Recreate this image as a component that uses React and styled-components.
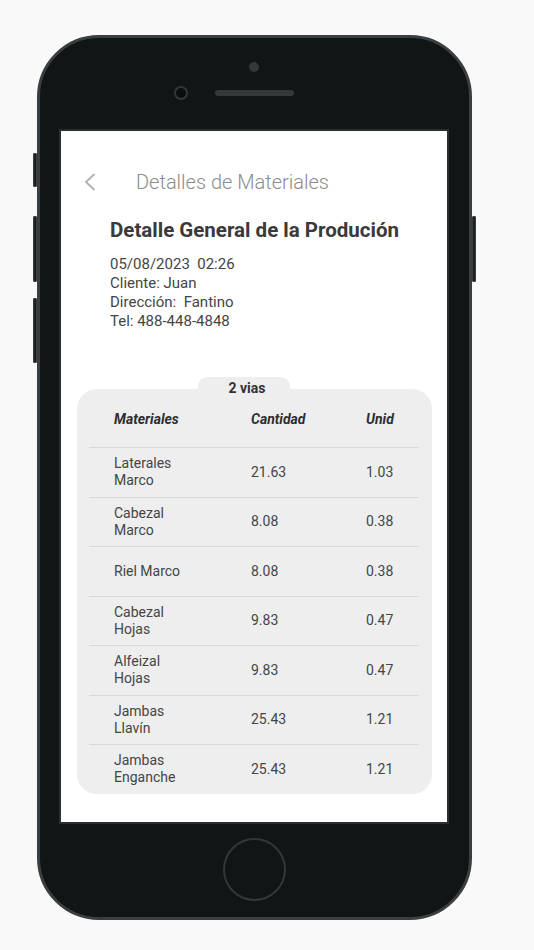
import React from "react";
import styled, { createGlobalStyle } from "styled-components";

const GlobalStyle = createGlobalStyle`
  html, body {
    margin: 0;
    padding: 0;
    background: #f9f9f9;
    font-family: Roboto, "Liberation Sans", sans-serif;
  }
  * {
    box-sizing: border-box;
  }
`;

const materiales = [
  { nombre: "Laterales\nMarco", cantidad: "21.63", unid: "1.03" },
  { nombre: "Cabezal\nMarco", cantidad: "8.08", unid: "0.38" },
  { nombre: "Riel Marco", cantidad: "8.08", unid: "0.38" },
  { nombre: "Cabezal\nHojas", cantidad: "9.83", unid: "0.47" },
  { nombre: "Alfeizal\nHojas", cantidad: "9.83", unid: "0.47" },
  { nombre: "Jambas\nLlavín", cantidad: "25.43", unid: "1.21" },
  { nombre: "Jambas\nEnganche", cantidad: "25.43", unid: "1.21" },
];

function App() {
  return (
    <Page>
      <GlobalStyle />
      <Phone>
        <SideButton $side="left" $top={115} $height={34} />
        <SideButton $side="left" $top={178} $height={66} />
        <SideButton $side="left" $top={260} $height={65} />
        <SideButton $side="right" $top={178} $height={66} />

        <TopBezel>
          <CameraDot />
          <SpeakerRow>
            <FrontCamera />
            <Speaker />
            <span />
          </SpeakerRow>
        </TopBezel>

        <Screen>
          <Header>
            <BackButton aria-label="volver">
              <svg width="14" height="18" viewBox="0 0 14 18">
                <polyline
                  points="11,1.5 3,9 11,16.5"
                  fill="none"
                  stroke="#b0b0b0"
                  strokeWidth="1.8"
                  strokeLinecap="round"
                  strokeLinejoin="round"
                />
              </svg>
            </BackButton>
            <Title>Detalles de Materiales</Title>
          </Header>

          <Summary>
            <Heading>Detalle General de la Produción</Heading>
            <Info>
              <p>05/08/2023  02:26</p>
              <p>Cliente: Juan</p>
              <p>Dirección:  Fantino</p>
              <p>Tel: 488-448-4848</p>
            </Info>
          </Summary>

          <Card>
            <Tab>2 vias</Tab>
            <CardBody>
              <HeadRow>
                <span>Materiales</span>
                <span>Cantidad</span>
                <span>Unid</span>
              </HeadRow>
              {materiales.map((m) => (
                <Row key={m.nombre}>
                  <Name>{m.nombre}</Name>
                  <span>{m.cantidad}</span>
                  <span>{m.unid}</span>
                </Row>
              ))}
            </CardBody>
          </Card>
        </Screen>

        <BottomBezel>
          <HomeButton />
        </BottomBezel>
      </Phone>
    </Page>
  );
}

const Page = styled.div`
  width: 534px;
  height: 950px;
  padding: 35px 0 0 37px;
`;

const Phone = styled.div`
  position: relative;
  display: flex;
  flex-direction: column;
  width: 435px;
  height: 885px;
  padding: 0 22px 0 21px;
  background: #121516;
  border: 3px solid #3a3e41;
  border-radius: 62px;
`;

const SideButton = styled.div`
  position: absolute;
  top: ${(p) => p.$top}px;
  ${(p) => (p.$side === "left" ? "left: -7px;" : "right: -7px;")}
  width: 4px;
  height: ${(p) => p.$height}px;
  background: #1d2022;
  border-radius: 2px;
  box-shadow: inset 0 0 0 1px #3a3e41;
`;

const TopBezel = styled.div`
  display: flex;
  flex-direction: column;
  align-items: center;
  height: 93px;
  padding-top: 24px;
`;

const CameraDot = styled.div`
  width: 10px;
  height: 10px;
  border-radius: 50%;
  background: #34383b;
`;

const SpeakerRow = styled.div`
  display: grid;
  grid-template-columns: 1fr auto 1fr;
  align-items: center;
  width: 100%;
  height: 14px;
  margin-top: 14px;
`;

const FrontCamera = styled.div`
  justify-self: end;
  width: 14px;
  height: 14px;
  margin-right: 27px;
  border-radius: 50%;
  background: #0b0d0e;
  border: 2px solid #33373a;
`;

const Speaker = styled.div`
  width: 79px;
  height: 6px;
  border-radius: 3px;
  background: #34383b;
`;

const Screen = styled.div`
  display: flex;
  flex-direction: column;
  height: 691px;
  background: #ffffff;
  box-shadow: 0 0 0 2px #2b2f32;
  padding: 39px 15px 0 16px;
`;

const Header = styled.div`
  display: flex;
  align-items: center;
  height: 24px;
`;

const BackButton = styled.button`
  display: flex;
  align-items: center;
  padding: 0;
  margin-left: 6px;
  border: none;
  outline: none;
  background: transparent;
  cursor: pointer;
`;

const Title = styled.h1`
  margin: 0 0 0 39px;
  font-size: 20px;
  line-height: 24px;
  font-weight: 300;
  color: #8c8c8c;
`;

const Summary = styled.div`
  padding-left: 33px;
  margin-top: 24px;
`;

const Heading = styled.h2`
  margin: 0;
  font-size: 20.5px;
  line-height: 24px;
  font-weight: 700;
  color: #3a3a3a;
`;

const Info = styled.div`
  margin-top: 13px;

  p {
    margin: 0;
    font-size: 15px;
    line-height: 19px;
    color: #454545;
    white-space: pre;
  }
`;

/* block, not flex: the tab label runs over the body's background */
const Card = styled.div`
  margin-top: 46px;
`;

const Tab = styled.div`
  width: 92px;
  height: 12px;
  margin-left: 121px;
  padding: 3px 0 0 6px;
  text-align: center;
  font-size: 14px;
  line-height: 17px;
  font-weight: 700;
  color: #333333;
  background: #eeeeee;
  border-radius: 9px 9px 0 0;
`;

const CardBody = styled.div`
  background: #eeeeee;
  border-radius: 20px;
  padding: 0 13px 0 12px;
`;

const Grid = styled.div`
  display: grid;
  grid-template-columns: 137px 115px 1fr;
  align-items: center;
  padding-left: 25px;
  font-size: 14px;
  line-height: 17px;
  color: #454545;
`;

const HeadRow = styled(Grid)`
  height: 58px;
  padding-top: 2px;
  font-weight: 700;
  font-style: italic;
  color: #2e2e2e;
`;

const Row = styled(Grid)`
  height: 49.5px;
  border-top: 1px solid #d9d9d9;
`;

const Name = styled.span`
  white-space: pre-line;
`;

const BottomBezel = styled.div`
  display: flex;
  align-items: center;
  justify-content: center;
  flex: 1;
`;

const HomeButton = styled.div`
  width: 63px;
  height: 63px;
  border-radius: 50%;
  border: 2px solid #33373a;
`;

export default App;
